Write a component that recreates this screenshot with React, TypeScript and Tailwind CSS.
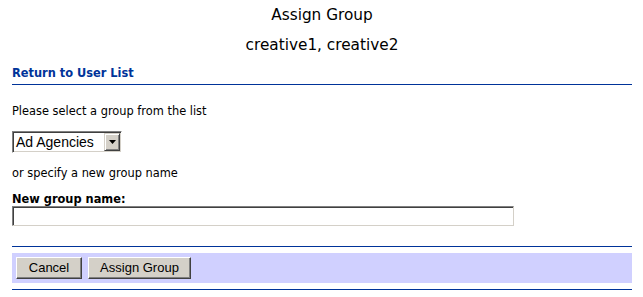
import React from "react";

const verdana = { fontFamily: "Verdana, 'DejaVu Sans', sans-serif" };
const arial = { fontFamily: "Arial, 'Liberation Sans', sans-serif" };

// classic win9x style push button
function ClassicButton({ label, width }: { label: string; width: string }) {
  return (
    <button
      type="button"
      style={arial}
      className={`${width} h-[22px] bg-[#d4d0c8] text-[13px] text-black border border-t-white border-l-white border-r-[#404040] border-b-[#404040] shadow-[inset_-1px_-1px_0_#808080] leading-[18px]`}
    >
      {label}
    </button>
  );
}

export default function App() {
  return (
    <div style={verdana} className="min-h-screen bg-white pl-[12px] pr-[11px] pt-[5px] text-black">
      {/* Header */}
      <h1 className="h-[20px] text-center text-[15.3px] leading-[20px]">Assign Group</h1>
      <h2 className="mt-[10px] h-[20px] text-center text-[15.3px] leading-[20px]">creative1, creative2</h2>

      <a href="#" className="mt-[11px] block h-[14px] text-[11.4px] font-bold leading-[14px] text-[#003399]">
        Return to User List
      </a>
      <div className="mt-[4px] h-px bg-[#003399]" />

      {/* Group picker */}
      <p className="mt-[19px] h-[14px] text-[11.4px] leading-[14px]">Please select a group from the list</p>

      <div
        style={arial}
        className="mt-[13px] flex h-[22px] w-[110px] items-center border border-t-[#808080] border-l-[#808080] border-r-white border-b-white bg-white shadow-[inset_1px_1px_0_#404040,inset_-1px_-1px_0_#d4d0c8]"
      >
        <span className="flex-1 pl-[3px] text-[14px] leading-[16px]">Ad Agencies</span>
        <span className="mr-[1px] flex h-[18px] w-[16px] items-center justify-center border border-t-[#d4d0c8] border-l-[#d4d0c8] border-r-[#404040] border-b-[#404040] bg-[#d4d0c8] shadow-[inset_1px_1px_0_#fff,inset_-1px_-1px_0_#808080]">
          <svg width="7" height="4" viewBox="0 0 7 4">
            <path d="M0 0h7L3.5 4z" fill="#000" />
          </svg>
        </span>
      </div>

      <p className="mt-[13px] h-[14px] text-[11.4px] leading-[14px]">or specify a new group name</p>

      <label className="mt-[12px] block h-[14px] text-[11.4px] font-bold leading-[14px]">New group name:</label>
      <input
        type="text"
        className="block h-[20px] w-[502px] border border-t-[#808080] border-l-[#808080] border-r-[#d4d0c8] border-b-[#d4d0c8] bg-white shadow-[inset_1px_1px_0_#404040] outline-none"
      />

      {/* Actions */}
      <div className="mt-[20px] h-px bg-[#003399]" />
      <div className="mt-[6px] flex h-[30px] items-center gap-[6px] bg-[#d0d0ff] px-[4px]">
        <ClassicButton label="Cancel" width="w-[66px]" />
        <ClassicButton label="Assign Group" width="w-[103px]" />
      </div>
      <div className="mt-[6px] h-px bg-[#003399]" />
    </div>
  );
}
